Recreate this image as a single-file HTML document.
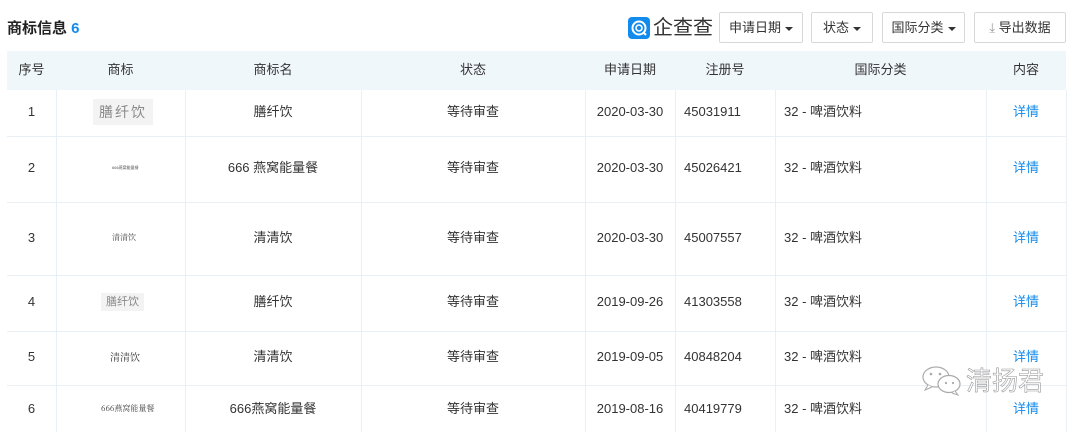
<!DOCTYPE html>
<html><head><meta charset="utf-8"><style>
*{margin:0;padding:0;box-sizing:border-box}
body{width:1080px;height:432px;background:#fff;font-family:"Liberation Sans","Noto Sans CJK SC",sans-serif;color:#333;position:relative;overflow:hidden;font-size:13px}
.a{position:absolute;line-height:18px}
.btn{position:absolute;top:12px;height:31px;border:1px solid #d8d8d8;border-radius:2px;background:#fff;font-size:13px;line-height:29px;text-align:center;color:#333}
.car{display:inline-block;width:0;height:0;border-left:4px solid transparent;border-right:4px solid transparent;border-top:4px solid #333;vertical-align:middle;margin-left:4px}
.hd{position:absolute;left:7px;top:51px;width:1059px;height:39px;background:#f0f7fb}
.vl{position:absolute;width:1px;background:#e8f0f6;top:90px;height:342px}
.hl{position:absolute;left:7px;width:1059px;height:1px;background:#e8f0f6}
.c{position:absolute;text-align:center;font-size:13px;color:#333;line-height:18px}
.l{color:#128bed}
</style></head><body>
<div class="a" style="left:7px;top:20px;font-size:15px;font-weight:bold;color:#222">商标信息 <span style="color:#128bed">6</span></div>
<svg class="a" style="left:628px;top:17px" width="22" height="22" viewBox="0 0 22 22"><rect width="22" height="22" rx="4" fill="#128bed"/><circle cx="11" cy="11" r="6.5" fill="none" stroke="#fff" stroke-width="2"/><circle cx="11" cy="11" r="3" fill="none" stroke="#fff" stroke-width="1.6"/><path d="M15 15l3 3" stroke="#fff" stroke-width="2"/></svg>
<div class="a" style="left:653px;top:16px;font-size:20px;line-height:24px;color:#333">企查查</div>
<div class="btn" style="left:719px;width:84px">申请日期<span class="car"></span></div>
<div class="btn" style="left:811px;width:62px">状态<span class="car"></span></div>
<div class="btn" style="left:882px;width:83px">国际分类<span class="car"></span></div>
<div class="btn" style="left:974px;width:92px"><span style="color:#999">⤓</span> 导出数据</div>
<div class="hd"></div>
<div class="c" style="left:7px;width:49px;top:61px">序号</div>
<div class="c" style="left:56px;width:129px;top:61px">商标</div>
<div class="c" style="left:185px;width:176px;top:61px">商标名</div>
<div class="c" style="left:361px;width:224px;top:61px">状态</div>
<div class="c" style="left:585px;width:90px;top:61px">申请日期</div>
<div class="c" style="left:675px;width:100px;top:61px">注册号</div>
<div class="c" style="left:775px;width:211px;top:61px">国际分类</div>
<div class="c" style="left:986px;width:80px;top:61px">内容</div>
<div class="vl" style="left:56px"></div><div class="vl" style="left:185px"></div><div class="vl" style="left:361px"></div><div class="vl" style="left:585px"></div><div class="vl" style="left:675px"></div><div class="vl" style="left:775px"></div><div class="vl" style="left:986px"></div><div class="vl" style="left:1066px"></div>
<div class="hl" style="top:136px"></div><div class="hl" style="top:202px"></div><div class="hl" style="top:275px"></div><div class="hl" style="top:331px"></div><div class="hl" style="top:385px"></div>

<div class="a" style="left:93px;top:99px;width:60px;height:26px;background:#f3f3f3;color:#888;font-size:14px;line-height:26px;text-align:center;letter-spacing:2px">膳纤饮</div>
<div class="a" style="left:112px;top:159px;font-size:4px;color:#555">666燕窝能量餐</div>
<div class="a" style="left:112px;top:229px;font-size:8px;color:#444;font-family:'Noto Serif CJK SC',serif">清清饮</div>
<div class="a" style="left:101px;top:293px;width:43px;height:18px;background:#f3f3f3;color:#888;font-size:11px;line-height:18px;text-align:center">膳纤饮</div>
<div class="a" style="left:110px;top:348px;font-size:10px;color:#333;font-family:'Noto Serif CJK SC',serif">清清饮</div>
<div class="a" style="left:101px;top:400px;font-size:8px;color:#444;font-family:'Noto Serif CJK SC',serif">666燕窝能量餐</div>

<div id="rows"></div>
<script>
var d=[[103,"1","膳纤饮","2020-03-30","45031911"],[159,"2","666 燕窝能量餐","2020-03-30","45026421"],[229,"3","清清饮","2020-03-30","45007557"],[293,"4","膳纤饮","2019-09-26","41303558"],[348,"5","清清饮","2019-09-05","40848204"],[400,"6","666燕窝能量餐","2019-08-16","40419779"]];
var h="";d.forEach(function(r){var t=r[0];
h+='<div class="c" style="left:7px;width:49px;top:'+t+'px">'+r[1]+'</div>';
h+='<div class="c" style="left:185px;width:176px;top:'+t+'px">'+r[2]+'</div>';
h+='<div class="c" style="left:361px;width:224px;top:'+t+'px">等待审查</div>';
h+='<div class="c" style="left:585px;width:90px;top:'+t+'px">'+r[3]+'</div>';
h+='<div class="a" style="left:684px;top:'+t+'px">'+r[4]+'</div>';
h+='<div class="a" style="left:784px;top:'+t+'px">32 - 啤酒饮料</div>';
h+='<div class="c l" style="left:986px;width:80px;top:'+t+'px">详情</div>';});
document.getElementById("rows").innerHTML=h;
</script>
<svg class="a" style="left:920px;top:365px" width="44" height="32" viewBox="0 0 44 32"><ellipse cx="16" cy="12" rx="13" ry="10" fill="#fff" stroke="#aaa" stroke-width="1.2"/><path d="M8 20l-3 5 7-3" fill="#fff" stroke="#aaa"/><ellipse cx="29" cy="19" rx="11" ry="8.5" fill="#fff" stroke="#aaa" stroke-width="1.2"/><path d="M35 26l3 4-6-2" fill="#fff" stroke="#aaa"/><circle cx="11" cy="9" r="1.3" fill="#aaa"/><circle cx="20" cy="9" r="1.3" fill="#aaa"/><circle cx="26" cy="18" r="1.1" fill="#aaa"/><circle cx="33" cy="18" r="1.1" fill="#aaa"/></svg>
<div class="a" style="left:966px;top:366px;font-size:26px;line-height:30px;color:rgba(255,255,255,0.7);-webkit-text-stroke:0.6px #999">清扬君</div>
</body></html>
